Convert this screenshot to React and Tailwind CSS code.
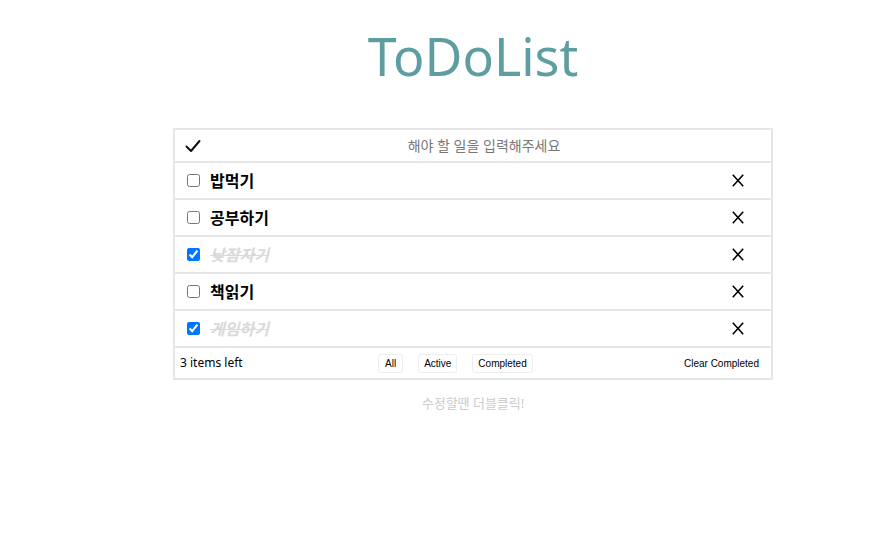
import { useState } from "react";

const initialTodos = [
  { id: 1, text: "밥먹기", done: false },
  { id: 2, text: "공부하기", done: false },
  { id: 3, text: "낮잠자기", done: true },
  { id: 4, text: "책읽기", done: false },
  { id: 5, text: "게임하기", done: true },
];

function CheckIcon() {
  return (
    <svg width="16" height="14" viewBox="0 0 16 14" fill="none">
      <path d="M1.5 7.5 L6 12 L14.5 2" stroke="#111" strokeWidth="2" strokeLinecap="round" strokeLinejoin="round" />
    </svg>
  );
}

function CloseIcon() {
  return (
    <svg width="12" height="13" viewBox="0 0 12 13" fill="none">
      <path d="M0.8 0.8 L11.2 12.2 M11.2 0.8 L0.8 12.2" stroke="#000" strokeWidth="1.6" />
    </svg>
  );
}

export default function App() {
  const [todos, setTodos] = useState(initialTodos);
  const left = todos.filter((t) => !t.done).length;

  const toggle = (id) =>
    setTodos(todos.map((t) => (t.id === id ? { ...t, done: !t.done } : t)));

  return (
    <div
      className="min-h-screen bg-white"
      style={{ fontFamily: '"Noto Sans", "Noto Sans CJK KR", sans-serif' }}
    >
      <div className="w-[600px] ml-[173px] flex flex-col">
        {/* TITLE */}
        <h1 className="text-center text-[#5f9ea0] text-[52px] leading-none pt-[30px] pb-[46px] font-normal">
          ToDoList
        </h1>

        {/* LIST */}
        <div className="border-2 border-[#e6e6e6]">
          <div className="h-[33px] flex items-center border-b-2 border-[#e6e6e6]">
            <div className="w-[36px] pl-[10px] flex items-center">
              <CheckIcon />
            </div>
            <input
              className="flex-1 text-center text-[14px] outline-none placeholder:text-[#777] pr-[14px]"
              placeholder="해야 할 일을 입력해주세요"
            />
          </div>

          {todos.map((t) => (
            <div
              key={t.id}
              className="h-[37px] flex items-center border-b-2 border-[#e6e6e6]"
            >
              <input
                type="checkbox"
                checked={t.done}
                onChange={() => toggle(t.id)}
                className="ml-[12px] w-[13px] h-[13px] accent-[#0075ff]"
              />
              <span
                className={
                  t.done
                    ? "ml-[10px] flex-1 text-[16px] font-bold italic line-through text-[#d9d9d9]"
                    : "ml-[10px] flex-1 text-[16px] font-bold text-black"
                }
              >
                {t.text}
              </span>
              <button className="mr-[27px] flex items-center">
                <CloseIcon />
              </button>
            </div>
          ))}

          <div className="h-[30px] flex items-center px-[5px] text-[12px]">
            <span className="w-[198px]">{left} items left</span>
            <div
              className="flex gap-[15px] text-[10px]"
              style={{ fontFamily: '"Liberation Sans", Arial, sans-serif' }}
            >
              <button className="border border-[#eee] rounded-[3px] px-[6px] h-[19px]">All</button>
              <button className="border border-[#eee] rounded-[3px] px-[5px] h-[19px]">Active</button>
              <button className="border border-[#eee] rounded-[3px] px-[5px] h-[19px]">Completed</button>
            </div>
            <button
              className="ml-auto mr-[7px] text-[10px]"
              style={{ fontFamily: '"Liberation Sans", Arial, sans-serif' }}
            >
              Clear Completed
            </button>
          </div>
        </div>

        <p className="text-center text-[13px] text-[#ccc] mt-[14px]">수정할땐 더블클릭!</p>
      </div>
    </div>
  );
}
